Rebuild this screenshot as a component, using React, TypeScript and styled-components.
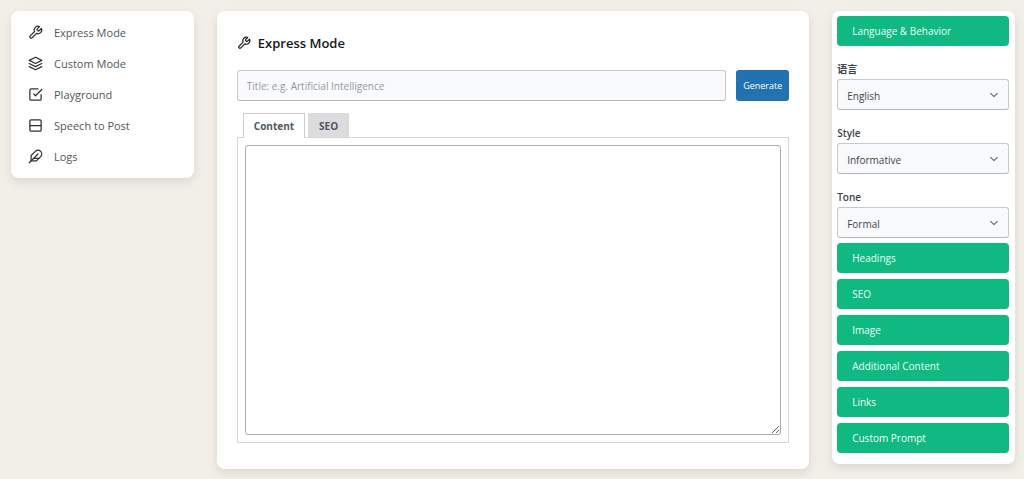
import React from "react";
import styled, { createGlobalStyle } from "styled-components";

const GlobalStyle = createGlobalStyle`
  * { box-sizing: border-box; }
  body {
    margin: 0;
    background: #f2efe8;
    color: #3c434a;
    font-family: "Open Sans", "Noto Sans CJK SC", sans-serif;
    font-size: 10px;
  }
  button, input, select, textarea { font: inherit; color: inherit; margin: 0; }
`;

const Page = styled.div`
  display: grid;
  grid-template-columns: 183fr 593fr 183fr;
  gap: 23px;
  align-items: start;
  padding: 11px 9px 10px 11px;
`;

const Panel = styled.div`
  background: #fff;
  border-radius: 8px;
  box-shadow: 0 4px 10px rgba(60, 60, 40, 0.13);
`;

const Nav = styled(Panel).attrs({ as: "nav" })`
  display: flex;
  flex-direction: column;
  gap: 7px;
  padding: 9px 17px 10px;
`;

const NavLink = styled.a`
  display: flex;
  align-items: center;
  gap: 11px;
  height: 24px;
  font-size: 11px;
  color: #50575e;
  text-decoration: none;
  > svg { color: #2c3338; }
`;

const Main = styled(Panel).attrs({ as: "main" })`
  padding: 20px 20px 26px;
`;

const Title = styled.h1`
  display: flex;
  align-items: center;
  gap: 7px;
  margin: 0 0 15px;
  font-size: 13px;
  line-height: 24px;
  font-weight: 600;
  color: #16181a;
`;

const TitleRow = styled.form`
  display: flex;
  gap: 10px;
  height: 31px;
  margin-bottom: 12px;
`;

const TitleInput = styled.input`
  flex: 1;
  min-width: 0;
  padding: 0 9px;
  border: 1px solid #c6cacf;
  border-bottom-color: #b4b8bd;
  border-radius: 3px;
  background: #f9fafc;
  &::placeholder { color: #94989c; opacity: 1; }
`;

const GenerateButton = styled.button`
  width: 53px;
  padding: 0;
  border: 0;
  border-radius: 3px;
  background: #2271b1;
  color: #fff;
  font-size: 9px;
`;

const Tabs = styled.div`
  display: flex;
  gap: 3px;
  padding-left: 6px;
`;

const Tab = styled.button<{ $active?: boolean }>`
  height: 24px;
  padding: 0 10px;
  border: 1px solid ${(p) => (p.$active ? "#ccc" : "#dcdcde")};
  border-bottom: 0;
  background: ${(p) => (p.$active ? "#fff" : "#dcdcde")};
  font-weight: 700;
  color: #50575e;
  ${(p) => p.$active && "position: relative; margin-bottom: -1px; height: 25px; padding-bottom: 1px;"}
`;

const TabPanel = styled.div`
  padding: 7px;
  border: 1px solid #d5d5d7;
`;

const Editor = styled.textarea`
  display: block;
  width: 100%;
  height: 290px;
  border: 1px solid #a9abae;
  border-radius: 3px;
  background: #fff;
`;

const Settings = styled(Panel).attrs({ as: "aside" })`
  padding: 5px 6px 11px 5px;
`;

const SectionButton = styled.button`
  display: block;
  width: 100%;
  height: 30px;
  padding: 0 15px;
  border: 0;
  border-radius: 4px;
  background: #10b981;
  color: #e8fff6;
  text-align: left;
`;

const Sections = styled.div`
  display: flex;
  flex-direction: column;
  gap: 6px;
  margin-top: 5px;
`;

const Fields = styled.div`
  display: flex;
  flex-direction: column;
  gap: 16px;
  margin-top: 16px;
`;

const Field = styled.div`
  display: flex;
  flex-direction: column;
  gap: 2px;
`;

const Label = styled.label`
  line-height: 15px;
  font-weight: 600;
`;

const SelectBox = styled.div`
  display: grid;
  align-items: center;
  > * { grid-area: 1 / 1; }
  > svg { justify-self: end; margin-right: 10px; color: #6b7177; pointer-events: none; }
`;

const Select = styled.select`
  appearance: none;
  width: 100%;
  height: 31px;
  padding: 2px 9px 0;
  border: 1px solid #c6cacf;
  border-bottom-color: #b4b8bd;
  border-radius: 3px;
  background: #f9fafc;
`;

const Icon = ({ children, size = 15, weight = 2 }: { children: React.ReactNode; size?: number; weight?: number }) => (
  <svg width={size} height={size} viewBox="0 0 24 24" fill="none" stroke="currentColor"
    strokeWidth={weight} strokeLinecap="round" strokeLinejoin="round" aria-hidden="true">
    {children}
  </svg>
);

const wrench = (
  <path d="M14.7 6.3a1 1 0 0 0 0 1.4l1.6 1.6a1 1 0 0 0 1.4 0l3.77-3.77a6 6 0 0 1-7.94 7.94l-6.91 6.91a2.12 2.12 0 0 1-3-3l6.91-6.91a6 6 0 0 1 7.94-7.94l-3.76 3.76z" />
);

const links = [
  { text: "Express Mode", icon: wrench },
  { text: "Custom Mode", icon: <><path d="M12 2 2 7l10 5 10-5z" /><path d="m2 17 10 5 10-5" /><path d="m2 12 10 5 10-5" /></> },
  { text: "Playground", icon: <><path d="m9 11 3 3L22 4" /><path d="M21 12v7a2 2 0 0 1-2 2H5a2 2 0 0 1-2-2V5a2 2 0 0 1 2-2h11" /></> },
  { text: "Speech to Post", icon: <><rect x="3" y="3" width="18" height="18" rx="2" /><path d="M3 12h18" /></> },
  { text: "Logs", icon: <><path d="M20.24 12.24a6 6 0 0 0-8.49-8.49L5 10.5V19h8.5z" /><path d="M16 8 2 22" /><path d="M17.5 15H9" /></> },
];

const fields = [
  { id: "language", label: "语言", value: "English" },
  { id: "style", label: "Style", value: "Informative" },
  { id: "tone", label: "Tone", value: "Formal" },
];

const sections = ["Headings", "SEO", "Image", "Additional Content", "Links", "Custom Prompt"];

export default function App() {
  return (
    <>
      <GlobalStyle />
      <Page>
        <Nav>
          {links.map((l) => (
            <NavLink href="#" key={l.text}><Icon>{l.icon}</Icon>{l.text}</NavLink>
          ))}
        </Nav>
        <Main>
          <Title><Icon size={14}>{wrench}</Icon>Express Mode</Title>
          <TitleRow>
            <TitleInput aria-label="Title" placeholder="Title: e.g. Artificial Intelligence" />
            <GenerateButton type="button">Generate</GenerateButton>
          </TitleRow>
          <Tabs role="tablist">
            <Tab role="tab" aria-selected $active>Content</Tab>
            <Tab role="tab" aria-selected={false}>SEO</Tab>
          </Tabs>
          <TabPanel role="tabpanel"><Editor aria-label="Content" /></TabPanel>
        </Main>
        <Settings>
          <SectionButton>Language &amp; Behavior</SectionButton>
          <Fields>
            {fields.map((f) => (
              <Field key={f.id}>
                <Label htmlFor={f.id}>{f.label}</Label>
                <SelectBox>
                  <Select id={f.id}><option>{f.value}</option></Select>
                  <Icon size={10} weight={3}><path d="m4 8 8 8 8-8" /></Icon>
                </SelectBox>
              </Field>
            ))}
          </Fields>
          <Sections>
            {sections.map((s) => <SectionButton key={s}>{s}</SectionButton>)}
          </Sections>
        </Settings>
      </Page>
    </>
  );
}
